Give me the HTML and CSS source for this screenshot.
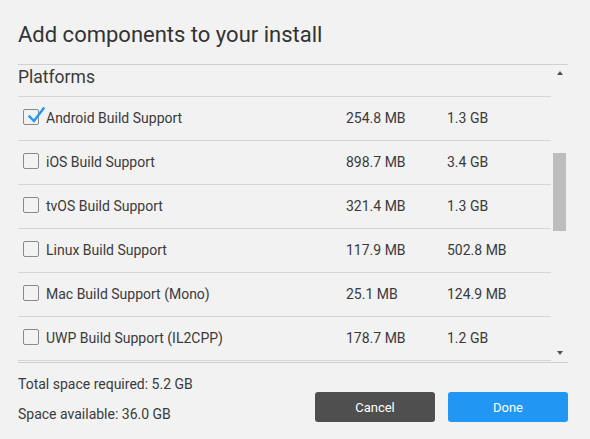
FILE: index.html
```html
<!DOCTYPE html>
<html>
<head>
<meta charset="utf-8">
<link rel="stylesheet" href="styles.css">
</head>
<body>
<div class="dialog">
  <h1 class="title">Add components to your install</h1>
  <div class="panel">
    <div class="list">
      <div class="section">Platforms</div>
      <div class="row">
        <span class="box checked"><svg class="tick" width="22" height="20" viewBox="0 0 22 20"><path d="M3.5 9.5 L8 14 L17.5 1.5" fill="none" stroke="#2196f3" stroke-width="2.4" stroke-linecap="square"/></svg></span>
        <span class="name">Android Build Support</span>
        <span class="size">254.8 MB</span>
        <span class="size">1.3 GB</span>
      </div>
      <div class="row">
        <span class="box"></span>
        <span class="name">iOS Build Support</span>
        <span class="size">898.7 MB</span>
        <span class="size">3.4 GB</span>
      </div>
      <div class="row">
        <span class="box"></span>
        <span class="name">tvOS Build Support</span>
        <span class="size">321.4 MB</span>
        <span class="size">1.3 GB</span>
      </div>
      <div class="row">
        <span class="box"></span>
        <span class="name">Linux Build Support</span>
        <span class="size">117.9 MB</span>
        <span class="size">502.8 MB</span>
      </div>
      <div class="row">
        <span class="box"></span>
        <span class="name">Mac Build Support (Mono)</span>
        <span class="size">25.1 MB</span>
        <span class="size">124.9 MB</span>
      </div>
      <div class="row">
        <span class="box"></span>
        <span class="name">UWP Build Support (IL2CPP)</span>
        <span class="size">178.7 MB</span>
        <span class="size">1.2 GB</span>
      </div>
    </div>
    <div class="scrollbar">
      <div class="arrow"><span class="tri up"></span></div>
      <div class="track"><div class="thumb"></div></div>
      <div class="arrow"><span class="tri down"></span></div>
    </div>
  </div>
  <div class="footer">
    <div class="space">
      <div class="line">Total space required: 5.2 GB</div>
      <div class="line">Space available: 36.0 GB</div>
    </div>
    <div class="buttons">
      <button class="btn cancel">Cancel</button>
      <button class="btn done">Done</button>
    </div>
  </div>
</div>
</body>
</html>
```
FILE: styles.css
```css
html, body {
  margin: 0;
  padding: 0;
  background: #f2f2f2;
}
body {
  font-family: Roboto, "Liberation Sans", sans-serif;
  color: #3a3a3a;
  width: 590px;
  height: 439px;
  overflow: hidden;
}
.dialog {
  padding: 0 22px 0 18px;
}
.title {
  margin: 0;
  padding-top: 22px;
  height: 64px;
  box-sizing: border-box;
  font-size: 22px;
  font-weight: 400;
  line-height: 26px;
  color: #333;
}
.panel {
  display: flex;
  border-top: 1px solid #cfcfcf;
  border-bottom: 1px solid #cfcfcf;
}
.list {
  width: 533px;
  padding-bottom: 1px;
}
.section {
  height: 32px;
  box-sizing: border-box;
  border-bottom: 1px solid #d6d6d6;
  font-size: 17.5px;
  line-height: 24px;
  color: #3a3a3a;
}
.row {
  height: 44px;
  box-sizing: border-box;
  border-bottom: 1px solid #d6d6d6;
  padding: 0 0 2px 5px;
  display: grid;
  grid-template-columns: 23px 300px 101px 1fr;
  align-items: center;
  font-size: 14px;
}
.box {
  position: relative;
  width: 16px;
  height: 16px;
  box-sizing: border-box;
  border: 1.5px solid #8a8a8a;
  border-radius: 2px;
  margin-top: -2px;
}
.tick {
  position: absolute;
  left: 1.5px;
  top: -3px;
}
.scrollbar {
  width: 17px;
  display: flex;
  flex-direction: column;
}
.arrow {
  height: 17px;
  display: flex;
  align-items: center;
  justify-content: center;
}
.tri {
  width: 0;
  height: 0;
  border-left: 3.5px solid transparent;
  border-right: 3.5px solid transparent;
}
.tri.up {
  border-bottom: 4px solid #505050;
  margin-top: -1px;
}
.tri.down {
  border-top: 4px solid #505050;
  margin-top: -1px;
}
.track {
  flex: 1;
  padding: 0 2px;
}
.thumb {
  margin-top: 71px;
  height: 78px;
  background: #bdbdbd;
}
.footer {
  display: flex;
  justify-content: space-between;
  align-items: flex-end;
}
.space {
  padding-top: 11px;
  display: flex;
  flex-direction: column;
  gap: 10px;
}
.line {
  font-size: 14px;
  line-height: 20px;
  color: #3a3a3a;
}
.buttons {
  display: flex;
  gap: 13px;
  margin-bottom: 2px;
}
.btn {
  width: 120px;
  height: 30px;
  border: none;
  border-radius: 3px;
  color: #fff;
  font-family: Roboto, "Liberation Sans", sans-serif;
  font-size: 13px;
  font-weight: 400;
  padding: 0;
}
.cancel {
  background: #4f4f4f;
}
.done {
  background: #2196f3;
}
```
